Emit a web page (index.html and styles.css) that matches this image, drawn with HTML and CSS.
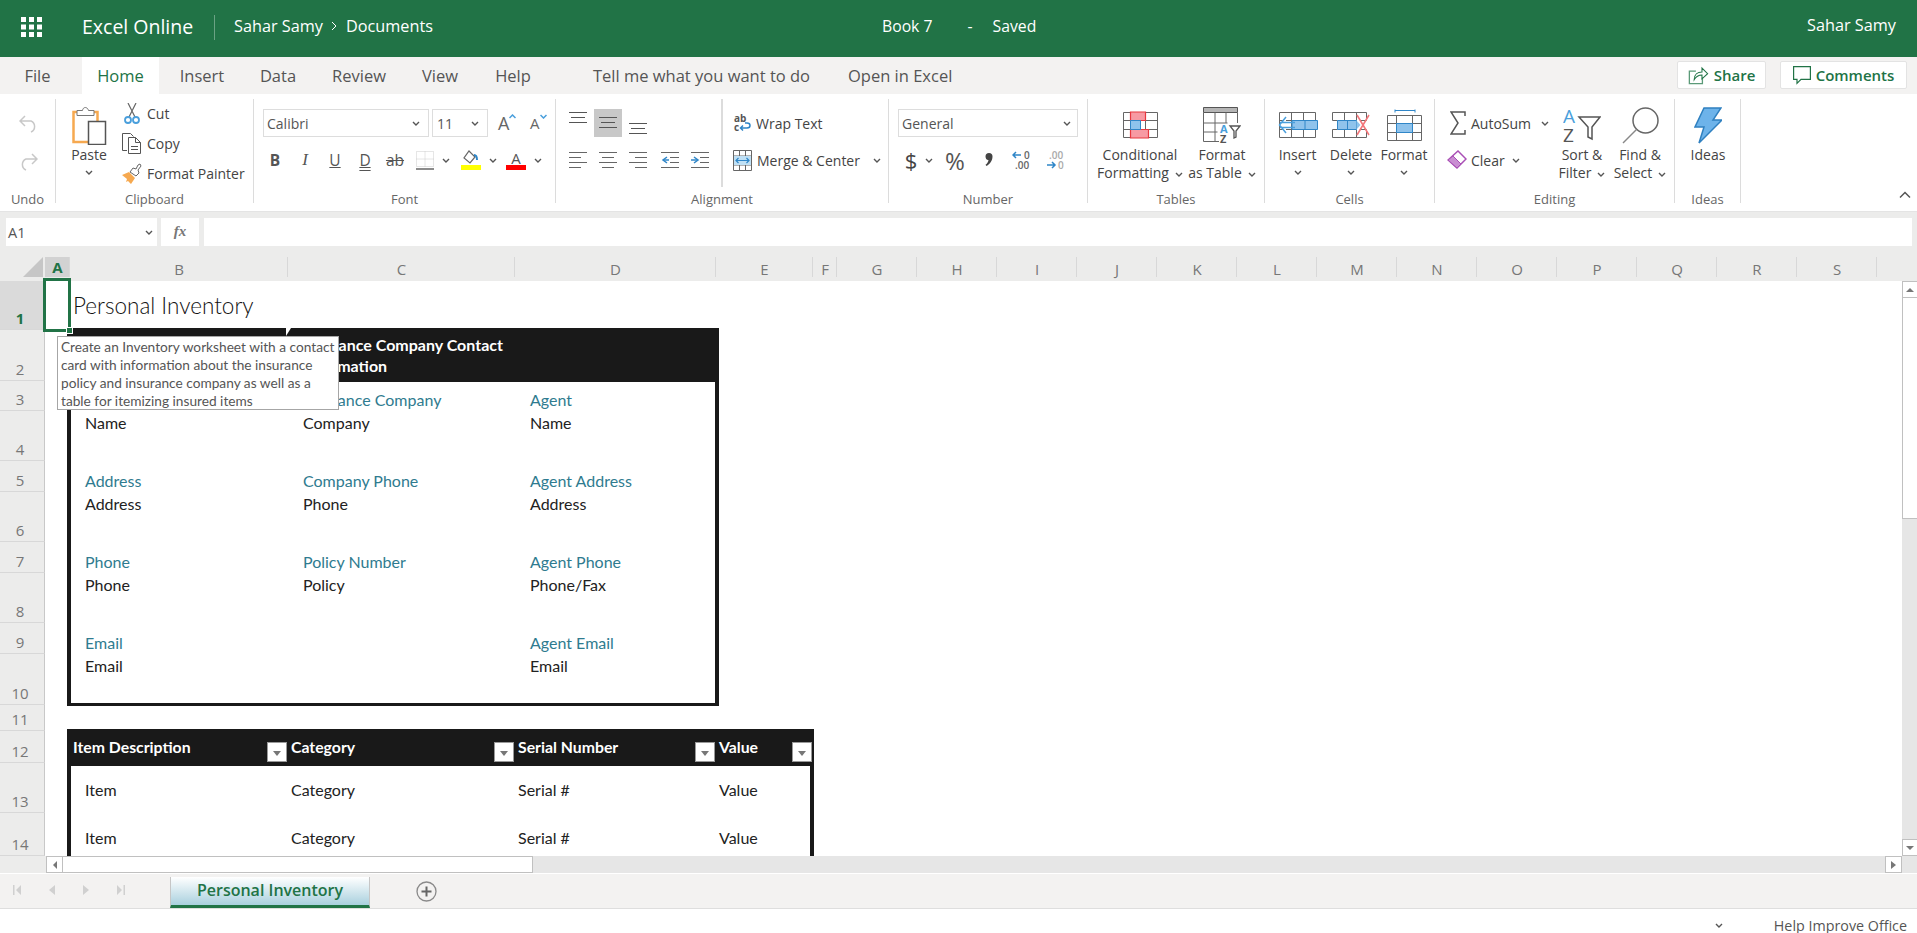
FILE: index.html
```html
<!DOCTYPE html>
<html lang="en">
<head>
    <meta charset="UTF-8">
    <meta name="viewport" content="width=device-width, initial-scale=1.0">
    <title>Book 7 - Excel Online</title>
    <link rel="stylesheet" href="styles.css">
</head>
<body>
<svg class="defs" width="0" height="0">
    <symbol id="chev" viewBox="0 0 8 5"><path d="M1 1l3 3 3-3" fill="none" stroke="#555" stroke-width="1.4"/></symbol>
    <symbol id="lines-top" viewBox="0 0 18 12"><path d="M0 .5h18M2 5.5h14M0 10.5h18" fill="none" stroke="#555"/></symbol>
    <symbol id="lines-left" viewBox="0 0 18 18"><path d="M0 1.5h18M0 6.5h12M0 11.5h18M0 16.5h12" fill="none" stroke="#666"/></symbol>
    <symbol id="lines-center" viewBox="0 0 18 18"><path d="M0 1.5h18M3 6.5h12M0 11.5h18M3 16.5h12" fill="none" stroke="#666"/></symbol>
    <symbol id="lines-right" viewBox="0 0 18 18"><path d="M0 1.5h18M6 6.5h12M0 11.5h18M6 16.5h12" fill="none" stroke="#666"/></symbol>
</svg>

<header class="topbar">
    <svg class="waffle" width="21" height="20" viewBox="0 0 21 20" fill="#fff"><path d="M0 0h5v5H0zM8 0h5v5H8zM16 0h5v5h-5zM0 7.5h5v5H0zM8 7.5h5v5H8zM16 7.5h5v5h-5zM0 15h5v5H0zM8 15h5v5H8zM16 15h5v5h-5z"/></svg>
    <span class="app_name">Excel Online</span>
    <span class="top_sep"></span>
    <span class="crumb">Sahar Samy</span>
    <svg class="crumb_arrow" width="7" height="10" viewBox="0 0 7 10"><path d="M1 1l4 4-4 4" fill="none" stroke="#fff"/></svg>
    <span class="crumb">Documents</span>
    <div class="doc_title"><span>Book 7</span><span class="doc_dash">-</span><span>Saved</span></div>
    <span class="user_name">Sahar Samy</span>
</header>

<nav class="tabs">
    <a class="tab tab_file">File</a>
    <a class="tab tab_home">Home</a>
    <a class="tab tab_insert">Insert</a>
    <a class="tab tab_data">Data</a>
    <a class="tab tab_review">Review</a>
    <a class="tab tab_view">View</a>
    <a class="tab tab_help">Help</a>
    <a class="tab tab_tell">Tell me what you want to do</a>
    <a class="tab tab_open">Open in Excel</a>
    <div class="tab_actions">
        <button class="pill pill_share">
            <svg width="21" height="20" viewBox="0 0 24 23" fill="none" stroke="#5b9a78" stroke-width="1.5"><path d="M9 7H1.5v14.5h15V15"/><path d="M7 17c0-6 4-9 9-9V3.5l6.500 6.500-6.500 6v-4.500c-4 0-7 2-9 5.500z" stroke="#217346" stroke-width="1.2"/></svg>
            Share
        </button>
        <button class="pill pill_comments">
            <svg width="18" height="19" viewBox="0 0 18 19" fill="none" stroke="#217346" stroke-width="1.2"><path d="M.6.6h16.8v12.8H8l-4 4v-4H.6z"/></svg>
            Comments
        </button>
    </div>
</nav>

<section class="ribbon">
    <div class="group group_undo">
        <div class="group_body undo_body">
            <svg width="19" height="18" viewBox="0 0 19 18" fill="none" stroke="#c8c8c8" stroke-width="1.5"><path d="M6 1L1 6l5 5M1 6h11a6 6 0 0 1 0 11"/></svg>
            <svg width="19" height="18" viewBox="0 0 19 18" fill="none" stroke="#c8c8c8" stroke-width="1.5"><path d="M13 1l5 5-5 5M18 6H7a6 6 0 0 0 0 11"/></svg>
        </div>
        <div class="group_label">Undo</div>
    </div>

    <div class="group group_clip">
        <div class="group_body clip_body">
            <div class="big_btn paste_btn">
                <div class="big_icon">
                    <svg width="35" height="39" viewBox="0 0 35 39" fill="none"><rect x="1.5" y="6" width="24" height="30" fill="#fff" stroke="#f6a950" stroke-width="2.5"/><path d="M5 4.5h5.500c.5-4 5-4 6 0H22v5H5z" fill="#fff" stroke="#777"/><rect x="16.5" y="15.5" width="17" height="23" fill="#fff" stroke="#555" stroke-width="1.5"/></svg>
                </div>
                <span>Paste</span>
                <svg class="chev chev_under"><use href="#chev"/></svg>
            </div>
            <div class="clip_rows">
                <div class="clip_row">
                    <svg width="20" height="21" viewBox="0 0 20 21" fill="none"><path d="M6 0l7 14M14 0L7 14" stroke="#666" stroke-width="1.2"/><circle cx="6" cy="17" r="3" stroke="#4a9fdc" stroke-width="1.8"/><circle cx="14" cy="17" r="3" stroke="#4a9fdc" stroke-width="1.8"/></svg>
                    <span>Cut</span>
                </div>
                <div class="clip_row">
                    <svg width="20" height="21" viewBox="0 0 20 21" fill="none" stroke="#555"><path d="M5 17.5H.5V.5h8l3 3"/><path d="M6.500 4.500h7l5 5v11h-12zM13.500 4.500v5h5M9 13.500h7M9 16.500h7"/></svg>
                    <span>Copy</span>
                </div>
                <div class="clip_row">
                    <svg width="20" height="21" viewBox="0 0 20 21"><path d="M0 12l7-3 6 6-4 6-3-3-2 1 1-3z" fill="#f6a950"/><path d="M8 9l3-4 3 1 2-4 2-1 1 2-3 4 1 3-3 3z" fill="#fff" stroke="#666"/></svg>
                    <span>Format Painter</span>
                </div>
            </div>
        </div>
        <div class="group_label">Clipboard</div>
    </div>

    <div class="group group_font">
        <div class="group_body">
            <div class="tool_row">
                <div class="select select_font"><span>Calibri</span><svg class="chev"><use href="#chev"/></svg></div>
                <div class="select select_size"><span>11</span><svg class="chev"><use href="#chev"/></svg></div>
                <div class="grow_font">A<svg width="7" height="5" viewBox="0 0 7 5"><path d="M.5 4l3-3 3 3" fill="none" stroke="#4a9fdc" stroke-width="1.5"/></svg></div>
                <div class="grow_font grow_small">A<svg width="7" height="5" viewBox="0 0 7 5"><path d="M.5 1l3 3 3-3" fill="none" stroke="#4a9fdc" stroke-width="1.5"/></svg></div>
            </div>
            <div class="tool_row font_tools">
                <span class="tool tool_b">B</span>
                <span class="tool tool_i">I</span>
                <span class="tool tool_u">U</span>
                <span class="tool tool_d">D</span>
                <span class="tool tool_s">ab</span>
                <span class="tool">
                    <svg width="18" height="19" viewBox="0 0 18 19" fill="none"><path d="M.5.5h17v15H.5zM9 .5v15M.5 8h17" stroke="#ccc" stroke-dasharray="1 1"/><path d="M0 18h18" stroke="#666" stroke-width="1.5"/></svg>
                </span>
                <svg class="chev chev_tool"><use href="#chev"/></svg>
                <span class="tool tool_fill">
                    <svg width="20" height="20" viewBox="0 0 20 20"><path d="M8 1l6 6-5 6-6-5z" fill="#fff" stroke="#666" stroke-width="1.2"/><path d="M13 5c3 0 3 3 3 5" fill="none" stroke="#2f86c8" stroke-width="2"/><path d="M0 15h20v5H0z" fill="#ffff00"/></svg>
                </span>
                <svg class="chev chev_tool2"><use href="#chev"/></svg>
                <span class="tool tool_color"><span class="color_a">A</span><i class="color_bar"></i></span>
                <svg class="chev chev_tool2"><use href="#chev"/></svg>
            </div>
        </div>
        <div class="group_label">Font</div>
    </div>

    <div class="group group_align">
        <div class="group_body align_body">
            <div class="align_left">
                <div class="tool_row align_row">
                    <svg class="ic18 ic_top" viewBox="0 0 18 12"><use href="#lines-top"/></svg>
                    <span class="align_on"><svg class="ic18 ic_mid" viewBox="0 0 18 12"><use href="#lines-top"/></svg></span>
                    <svg class="ic18 ic_bot" viewBox="0 0 18 12"><use href="#lines-top"/></svg>
                </div>
                <div class="tool_row align_row2">
                    <svg class="ic18 ic_full"><use href="#lines-left"/></svg>
                    <svg class="ic18 ic_full"><use href="#lines-center"/></svg>
                    <svg class="ic18 ic_full"><use href="#lines-right"/></svg>
                    <svg class="ic18 ic_full" viewBox="0 0 18 18"><path d="M9 6.5h9M9 11.5h9M0 16.5h18M0 1.5h18" fill="none" stroke="#666"/><path d="M6 6L2 9l4 3" fill="none" stroke="#2f86c8" stroke-width="1.5"/><path d="M2 9h6" stroke="#2f86c8" stroke-width="1.5"/></svg>
                    <svg class="ic18 ic_full" viewBox="0 0 18 18"><path d="M9 6.5h9M9 11.5h9M0 16.5h18M0 1.5h18" fill="none" stroke="#666"/><path d="M3 6l4 3-4 3" fill="none" stroke="#2f86c8" stroke-width="1.5"/><path d="M0 9h6" stroke="#2f86c8" stroke-width="1.5"/></svg>
                </div>
            </div>
            <div class="align_right">
                <div class="tool_row wrap_row">
                    <svg class="wrap_ic" width="19" height="19" viewBox="0 0 19 19"><text x="1" y="8" class="wrap_letters">ab</text><text x="1" y="17" class="wrap_letters">c</text><path d="M8 14h6c4 0 4-5 0-5h-2M10 11.5L7.5 14l2.500 2.500" fill="none" stroke="#2f86c8" stroke-width="1.5"/></svg>
                    <span>Wrap Text</span>
                </div>
                <div class="tool_row merge_row">
                    <svg width="19" height="21" viewBox="0 0 19 21"><path d="M.5.5h18v20H.5zM.5 6h18M.5 15h18M6.500.5V6M12.500.5V6M6.500 15v5.500M12.500 15v5.500" fill="none" stroke="#666"/><path d="M1 6h17v9H1z" fill="#bfe0f5"/><path d="M3 10.5h13M5.500 8L3 10.500 5.500 13M13.500 8l2.500 2.500-2.500 2.500" fill="none" stroke="#2f86c8" stroke-width="1.2"/></svg>
                    <span>Merge &amp; Center</span>
                    <svg class="chev chev_merge"><use href="#chev"/></svg>
                </div>
            </div>
        </div>
        <div class="group_label">Alignment</div>
    </div>

    <div class="group group_number">
        <div class="group_body">
            <div class="tool_row">
                <div class="select select_number"><span>General</span><svg class="chev"><use href="#chev"/></svg></div>
            </div>
            <div class="tool_row number_tools">
                <span class="num_dollar">$</span>
                <svg class="chev chev_dollar"><use href="#chev"/></svg>
                <span class="num_percent">%</span>
                <svg class="num_comma" width="10" height="16" viewBox="0 0 10 16"><path d="M1.500 4.500a3.500 3.500 0 1 1 7 0c0 4-2.500 7.500-6 9.500l-1-1.200c1.500-1.200 2.700-2.800 3-4.900-1.800.2-3-1.400-3-3.400z" fill="#444"/></svg>
                <span class="num_dec">
                    <svg width="20" height="20" viewBox="0 0 20 20"><path d="M1 5h8M4 2L1 5l3 3" fill="none" stroke="#2f86c8" stroke-width="1.5"/><text x="12" y="9" class="dec_text">0</text><text x="3" y="19" class="dec_text">.00</text></svg>
                </span>
                <span class="num_dec num_dec2">
                    <svg width="20" height="20" viewBox="0 0 20 20"><text x="3" y="9" class="dec_text dec_light">.00</text><path d="M1 15h8M6 12l3 3-3 3" fill="none" stroke="#2f86c8" stroke-width="1.5"/><text x="12" y="19" class="dec_text dec_light">0</text></svg>
                </span>
            </div>
        </div>
        <div class="group_label">Number</div>
    </div>

    <div class="group group_tables">
        <div class="group_body btn_row">
            <div class="big_btn btn_cond">
                <div class="big_icon">
                    <svg width="35" height="28" viewBox="0 0 35 28" fill="none"><path d="M.5 1.5h34v25H.5zM.5 9.5h34M.5 18.5h34M11.500 1.500v25M22.500 1.500v25" stroke="#666"/><path d="M7.500 1h15v8.500h-15zM7.500 18.500h18V27h-18z" fill="#f79aa3" stroke="#e8383f" stroke-width="1.2"/><path d="M7.500 9.500h10v9h-10z" fill="#8fc3ec" stroke="#2f86c8"/></svg>
                </div>
                <span>Conditional</span>
                <span>Formatting<svg class="chev chev_in"><use href="#chev"/></svg></span>
            </div>
            <div class="big_btn btn_table">
                <div class="big_icon">
                    <svg width="38" height="36" viewBox="0 0 38 36" fill="none"><path d="M.5.5h34v5H.5z" fill="#b5b5b5" stroke="#555"/><path d="M.5 5.5v29H16M34.500 5.500V16M.5 16h24M.5 25h14M12 5.500v29M23 5.500V16" stroke="#666"/><text x="17" y="26" class="sort_a sort_sm">A</text><text x="17" y="36" class="sort_z sort_sm">Z</text><path d="M27 19h10l-4 5v6l-2 1v-7z" fill="#fff" stroke="#555" stroke-width="1.3"/></svg>
                </div>
                <span>Format</span>
                <span>as Table<svg class="chev chev_in"><use href="#chev"/></svg></span>
            </div>
        </div>
        <div class="group_label">Tables</div>
    </div>

    <div class="group group_cells">
        <div class="group_body btn_row">
            <div class="big_btn btn_cell btn_insert">
                <div class="big_icon">
                    <svg width="40" height="28" viewBox="0 0 40 28" fill="none"><path d="M1.500 1.500h36v25h-36zM1.500 9.500h36M1.500 18.500h36M13.500 1.500v25M25.500 1.500v25" stroke="#666"/><path d="M14 9.500h25.500v9H14z" fill="#8fc3ec" stroke="#2f86c8"/><path d="M27 9.500v9" stroke="#2f86c8"/><path d="M8 6L1.500 14 8 22M2 11.500h15M2 16.500h15" fill="#fff" stroke="#4a9fdc" stroke-width="1.5"/></svg>
                </div>
                <span>Insert</span>
                <svg class="chev chev_under"><use href="#chev"/></svg>
            </div>
            <div class="big_btn btn_cell btn_delete">
                <div class="big_icon">
                    <svg width="38" height="28" viewBox="0 0 38 28" fill="none"><path d="M.5 9.500v-8h34v8M.5 18.500v8h34v-8M.5 9.500h5M.5 18.500h5M29 9.500h5.500M29 18.500h5.500M12.500 1.500v8M12.500 18.500v8M24.500 1.500v8M24.500 18.500v8" stroke="#666"/><path d="M5.500 9.500h19v9h-19z" fill="#8fc3ec" stroke="#2f86c8"/><path d="M15.500 9.500v9" stroke="#2f86c8"/><path d="M24.500 9.500l4 4.500-4 4.500" fill="#8fc3ec"/><path d="M25 4l12 20M37 4L25 24" stroke="#f2767a" stroke-width="1.6"/></svg>
                </div>
                <span>Delete</span>
                <svg class="chev chev_under"><use href="#chev"/></svg>
            </div>
            <div class="big_btn btn_cell btn_format">
                <div class="big_icon">
                    <svg width="35" height="33" viewBox="0 0 35 33" fill="none"><path d="M8 1.500h20M8 .5v3M28 .5v3" stroke="#2f86c8"/><path d="M.5 6.500h34v25H.5zM.5 14.500h34M.5 23.500h34M9.500 6.500v25M25.500 6.500v25" stroke="#666"/><path d="M9.500 14.500h16v9h-16z" fill="#8fc3ec" stroke="#2f86c8"/></svg>
                </div>
                <span>Format</span>
                <svg class="chev chev_under"><use href="#chev"/></svg>
            </div>
        </div>
        <div class="group_label">Cells</div>
    </div>

    <div class="group group_editing">
        <div class="group_body btn_row">
            <div class="edit_small">
                <div class="edit_row">
                    <svg width="16" height="24" viewBox="0 0 16 24" fill="none"><path d="M15 5V1H1l7 11-7 11h14v-4" stroke="#555" stroke-width="1.5"/></svg>
                    <span>AutoSum</span>
                    <svg class="chev chev_sum"><use href="#chev"/></svg>
                </div>
                <div class="edit_row edit_clear">
                    <svg width="20" height="20" viewBox="0 0 20 20" fill="none"><path d="M11 1l8 8-9 9-9-8z" fill="#fff" stroke="#a94fb5" stroke-width="1.5"/><path d="M6 6l8 8-4 4-9-8z" fill="#c98ed2" stroke="#a94fb5"/></svg>
                    <span>Clear</span>
                    <svg class="chev chev_clear"><use href="#chev"/></svg>
                </div>
            </div>
            <div class="big_btn btn_sort">
                <div class="big_icon">
                    <svg width="38" height="35" viewBox="0 0 38 35" fill="none"><text x="0" y="15" class="sort_a">A</text><text x="0" y="34" class="sort_z">Z</text><path d="M16 9h21l-8 10v12l-4-2V19z" stroke="#555" stroke-width="1.5"/></svg>
                </div>
                <span>Sort &amp;</span>
                <span>Filter<svg class="chev chev_in"><use href="#chev"/></svg></span>
            </div>
            <div class="big_btn btn_find">
                <div class="big_icon">
                    <svg width="37" height="37" viewBox="0 0 37 37" fill="none"><circle cx="23.5" cy="13.5" r="12.5" stroke="#666" stroke-width="1.5"/><path d="M14.500 22.500L1 36" stroke="#888" stroke-width="1.5"/></svg>
                </div>
                <span>Find &amp;</span>
                <span>Select<svg class="chev chev_in"><use href="#chev"/></svg></span>
            </div>
        </div>
        <div class="group_label">Editing</div>
    </div>

    <div class="group group_ideas">
        <div class="group_body btn_row">
            <div class="big_btn btn_ideas">
                <div class="big_icon">
                    <svg width="28" height="37" viewBox="0 0 28 37"><path d="M10 1h17l-8 12h9L5 36l5-16H1z" fill="#6db3ea" stroke="#2f80c0" stroke-width="1.5"/></svg>
                </div>
                <span>Ideas</span>
            </div>
        </div>
        <div class="group_label">Ideas</div>
    </div>

    <svg class="collapse" width="12" height="8" viewBox="0 0 12 8"><path d="M1 6.5l5-5 5 5" fill="none" stroke="#555" stroke-width="1.5"/></svg>
</section>

<section class="formula_bar">
    <div class="name_box"><span>A1</span><svg class="chev"><use href="#chev"/></svg></div>
    <div class="fx_box">fx</div>
    <div class="formula_input"></div>
</section>

<main class="sheet">
    <div class="corner"><svg width="20" height="20" viewBox="0 0 20 20"><path d="M20 0v20H0z" fill="#c6c6c6"/></svg></div>
    <div class="col_head col_sel">A</div>
    <div class="col_head">B</div>
    <div class="col_head">C</div>
    <div class="col_head">D</div>
    <div class="col_head">E</div>
    <div class="col_head">F</div>
    <div class="col_head">G</div>
    <div class="col_head">H</div>
    <div class="col_head">I</div>
    <div class="col_head">J</div>
    <div class="col_head">K</div>
    <div class="col_head">L</div>
    <div class="col_head">M</div>
    <div class="col_head">N</div>
    <div class="col_head">O</div>
    <div class="col_head">P</div>
    <div class="col_head">Q</div>
    <div class="col_head">R</div>
    <div class="col_head">S</div>
    <div class="col_head col_last"></div>

    <div class="row_head row_sel r1">1</div>
    <div class="row_head r2">2</div>
    <div class="row_head r3">3</div>
    <div class="row_head r4">4</div>
    <div class="row_head r5">5</div>
    <div class="row_head r6">6</div>
    <div class="row_head r7">7</div>
    <div class="row_head r8">8</div>
    <div class="row_head r9">9</div>
    <div class="row_head r10">10</div>
    <div class="row_head r11">11</div>
    <div class="row_head r12">12</div>
    <div class="row_head r13">13</div>
    <div class="row_head r14">14</div>

    <div class="card card_contact"><div class="card_band"></div></div>
    <div class="card card_items"><div class="card_band band_items"></div></div>

    <div class="title r1 cb">Personal Inventory</div>

    <div class="band_text r2 cc">Insurance Company Contact Information</div>

    <div class="label r3 cc">Insurance Company</div>
    <div class="label r3 cd">Agent</div>
    <div class="value r4 cb">Name</div>
    <div class="value r4 cc">Company</div>
    <div class="value r4 cd">Name</div>

    <div class="label r5 cb">Address</div>
    <div class="label r5 cc">Company Phone</div>
    <div class="label r5 cd">Agent Address</div>
    <div class="value r6 cb">Address</div>
    <div class="value r6 cc">Phone</div>
    <div class="value r6 cd">Address</div>

    <div class="label r7 cb">Phone</div>
    <div class="label r7 cc">Policy Number</div>
    <div class="label r7 cd">Agent Phone</div>
    <div class="value r8 cb">Phone</div>
    <div class="value r8 cc">Policy</div>
    <div class="value r8 cd">Phone/Fax</div>

    <div class="label r9 cb">Email</div>
    <div class="label r9 cd">Agent Email</div>
    <div class="value r10 cb">Email</div>
    <div class="value r10 cd">Email</div>

    <div class="th r12 cb"><span>Item Description</span><i class="filter"></i></div>
    <div class="th r12 cc"><span>Category</span><i class="filter"></i></div>
    <div class="th r12 cd"><span>Serial Number</span><i class="filter"></i></div>
    <div class="th r12 ce"><span>Value</span><i class="filter"></i></div>

    <div class="td13 r13 cb td_first">Item</div>
    <div class="td13 r13 cc">Category</div>
    <div class="td13 r13 cd">Serial #</div>
    <div class="td13 r13 ce">Value</div>
    <div class="td14 r14 cb td_first">Item</div>
    <div class="td14 r14 cc">Category</div>
    <div class="td14 r14 cd">Serial #</div>
    <div class="td14 r14 ce">Value</div>

    <div class="vscroll">
        <button class="sb_btn"><i class="arrow_up"></i></button>
        <div class="sb_thumb_v"></div>
        <div class="sb_track"></div>
        <button class="sb_btn"><i class="arrow_down"></i></button>
    </div>

    <div class="selection"><i class="sel_handle"></i></div>
    <div class="notch"></div>
    <div class="tooltip">Create an Inventory worksheet with a contact<br>card with information about the insurance<br>policy and insurance company as well as a<br>table for itemizing insured items</div>
</main>

<div class="hscroll">
    <div class="hs_gap"></div>
    <button class="hs_btn"><i class="arrow_left"></i></button>
    <div class="hs_thumb"></div>
    <div class="hs_track"></div>
    <button class="hs_btn hs_btn_r"><i class="arrow_right"></i></button>
</div>

<div class="sheet_tabs">
    <div class="sheet_nav">
        <svg width="8" height="12" viewBox="0 0 8 12" fill="#d0d0d0"><path d="M0 1h1.5v10H0zM8 1v10L3 6z"/></svg>
        <svg width="6" height="12" viewBox="0 0 6 12" fill="#d0d0d0"><path d="M6 1v10L0 6z"/></svg>
        <svg width="6" height="12" viewBox="0 0 6 12" fill="#d0d0d0"><path d="M0 1v10l6-5z"/></svg>
        <svg width="8" height="12" viewBox="0 0 8 12" fill="#d0d0d0"><path d="M8 1H6.5v10H8zM0 1v10l5-5z"/></svg>
    </div>
    <div class="sheet_tab">Personal Inventory</div>
    <svg class="add_sheet" width="21" height="21" viewBox="0 0 21 21" fill="none"><circle cx="10.5" cy="10.5" r="9.5" stroke="#8a8a8a" stroke-width="1.3"/><path d="M10.5 5.5v10M5.5 10.5h10" stroke="#666" stroke-width="2"/></svg>
</div>

<footer class="status">
    <svg class="chev"><use href="#chev"/></svg>
    <span class="status_text">Help Improve Office</span>
</footer>
</body>
</html>
```

FILE: styles.css
```css
*{
	box-sizing: border-box;
}
html, body{
	margin: 0;
	padding: 0;
	height: 933px;
	overflow: hidden;
	background: #fff;
	font-family: "Open Sans", sans-serif;
	color: #444;
}
.defs{ position: absolute; }
button{ font-family: inherit; padding: 0; }
.chev{ width: 8px; height: 5px; flex: none; }

/* top green bar */
.topbar{
	height: 57px;
	background: #217346;
	color: #fff;
	display: flex;
	align-items: center;
	position: relative;
	padding-left: 21px;
}
.waffle{ margin-top: -3px; }
.app_name{ font-size: 19.5px; margin: -5px 0 0 40px; width: 132px; white-space: nowrap; }
.top_sep{ width: 1px; height: 25px; background: #6ba284; margin-top: -3px; }
.crumb{ font-size: 16.25px; margin: -5px 0 0 19px; white-space: nowrap; }
.crumb_arrow{ margin: -6px -11px 0 8px; }
.doc_title{
	position: absolute;
	left: 882px;
	top: 15px;
	font-size: 15.75px;
	display: flex;
}
.doc_dash{ margin: 0 20px 0 35px; }
.user_name{ position: absolute; right: 21px; top: 14px; font-size: 16.25px; }

/* tab row */
.tabs{
	height: 37px;
	background: #f3f2f1;
	display: flex;
	position: relative;
	font-size: 16.5px;
	line-height: 38px;
	color: #555;
}
.tab{ display: block; text-align: center; white-space: nowrap; }
.tab_file{ width: 82px; padding-right: 7px; }
.tab_home{ width: 77px; background: #fff; color: #217346; }
.tab_insert{ width: 86px; }
.tab_data{ width: 66px; }
.tab_review{ width: 96px; }
.tab_view{ width: 66px; }
.tab_help{ width: 80px; }
.tab_tell{ margin-left: 40px; width: 217px; }
.tab_open{ margin-left: 38px; width: 104px; }
.tab_actions{
	position: absolute;
	right: 10px;
	top: 4px;
	display: flex;
	gap: 14px;
}
.pill{
	height: 28px;
	background: #fff;
	border: 1px solid #e3e3e3;
	border-radius: 2px;
	color: #217346;
	font-size: 15px;
	font-weight: 600;
	display: flex;
	align-items: center;
	justify-content: center;
	gap: 5px;
}
.pill_share{ width: 89px; }
.pill_comments{ width: 127px; }

/* ribbon */
.ribbon{
	height: 118px;
	padding-top: 5px;
	background: #fff;
	display: flex;
	position: relative;
	border-bottom: 1px solid #e4e4e4;
}
.group{
	height: 104px;
	border-right: 1px solid #dcdcdc;
	display: flex;
	flex-direction: column;
	flex: none;
}
.group_body{ height: 92px; font-size: 14px; color: #444; flex: none; }
.group_label{
	text-align: center;
	font-size: 13px;
	line-height: 16px;
	height: 12px;
	color: #666;
}
.group_undo{ width: 56px; }
.group_clip{ width: 198px; }
.group_font{ width: 302px; }
.group_align{ width: 333px; }
.group_number{ width: 199px; }
.group_tables{ width: 177px; }
.group_cells{ width: 170px; }
.group_editing{ width: 240px; }
.group_ideas{ width: 66px; }
.collapse{ position: absolute; left: 1899px; top: 97px; }

.undo_body{
	display: flex;
	flex-direction: column;
	padding: 16px 0 0 19px;
	gap: 20px;
}

.big_btn{
	display: flex;
	flex-direction: column;
	align-items: center;
	padding-top: 5px;
	line-height: 18px;
	white-space: nowrap;
	flex: none;
}
.big_icon{
	height: 42px;
	display: flex;
	align-items: center;
	justify-content: center;
}
.chev_under{ margin-top: 6px; }
.chev_in{ margin-left: 6px; vertical-align: 1px; }

/* clipboard */
.clip_body{ display: flex; }
.paste_btn{ width: 66px; }
.clip_rows{ display: flex; flex-direction: column; margin-top: -1px; }
.clip_row{
	height: 30px;
	display: flex;
	align-items: center;
	gap: 5px;
	white-space: nowrap;
}

/* font and number rows */
.tool_row{ display: flex; align-items: center; height: 28px; margin-top: 10px; }
.tool_row + .tool_row{ margin-top: 9px; }
.select{
	height: 28px;
	border: 1px solid #ddd;
	background: #fff;
	display: flex;
	align-items: center;
	justify-content: space-between;
	padding: 0 8px 0 3px;
	font-size: 14px;
	color: #555;
}
.select_font{ width: 166px; margin-left: 9px; }
.select_size{ width: 56px; margin-left: 3px; padding-left: 4px; }
.select_number{ width: 180px; margin-left: 9px; padding-right: 6px; }
.grow_font{
	font-size: 18px;
	width: 22px;
	margin-left: 10px;
	color: #666;
	display: flex;
	align-items: flex-start;
	line-height: 22px;
}
.grow_font svg{ margin-top: 2px; }
.grow_small{ font-size: 15px; margin-left: 10px; }
.font_tools{ padding-left: 6px; }
.tool{
	width: 30px;
	text-align: center;
	font-size: 15.5px;
	color: #555;
	line-height: 20px;
	flex: none;
	display: flex;
	justify-content: center;
	align-items: center;
}
.tool_b{ font-weight: 700; }
.tool_i{ font-style: italic; font-family: "Liberation Serif", serif; font-size: 17px; }
.tool_u{ text-decoration: underline; }
.tool_d{ text-decoration: underline double; }
.tool_s{ text-decoration: line-through; }
.chev_tool{ margin: 0 2px; }
.tool_fill{ width: 34px; margin-left: 2px; }
.chev_tool2{ margin: 0 1px; }
.tool_color{ width: 34px; margin-left: 1px; flex-direction: column; height: 20px; }
.color_a{ font-size: 15px; line-height: 16px; height: 15px; }
.color_bar{ width: 20px; height: 5px; background: #ff0000; display: block; }

/* alignment */
.align_body{ display: flex; }
.align_left{ width: 165px; height: 88px; }
.align_right{ height: 88px; border-left: 2px solid #dcdcdc; padding-left: 10px; white-space: nowrap; }
.align_row{ padding-left: 13px; }
.align_row2{ padding-left: 13px; gap: 12px; }
.ic18{ width: 18px; height: 18px; flex: none; }
.ic_top, .ic_mid, .ic_bot{ height: 12px; }
.ic_top{ margin-top: -10px; }
.ic_bot{ margin: 12px 0 0 7px; }
.align_on{
	width: 28px;
	height: 28px;
	margin-left: 7px;
	background: #c8c8c8;
	display: flex;
	align-items: center;
	justify-content: center;
}
.align_row2 .ic_full:nth-child(4){ margin-left: 2px; }
.wrap_row{ gap: 4px; }
.merge_row{ gap: 5px; }
.wrap_letters{ font-size: 10px; font-weight: 700; fill: #555; font-family: "Open Sans", sans-serif; }
.chev_merge{ margin-left: 8px; }

/* number */
.number_tools{ padding-left: 13px; }
.num_dollar{ font-size: 22px; width: 18px; text-align: center; color: #444; flex: none; }
.chev_dollar{ margin-left: 5px; }
.num_percent{ font-size: 24px; margin-left: 6px; color: #555; width: 32px; text-align: center; flex: none; }
.num_comma{ margin-left: 13px; flex: none; }
.num_dec{ margin-left: 18px; display: flex; }
.num_dec2{ margin-left: 14px; }
.dec_text{ font-size: 10px; font-weight: 600; fill: #666; font-family: "Open Sans", sans-serif; }
.dec_light{ fill: #aaa; }

/* tables, cells, editing */
.btn_row{ display: flex; }
.btn_cond{ width: 96px; margin-left: 4px; }
.btn_table{ width: 68px; }
.btn_cell{ width: 55px; }
.btn_insert{ margin-left: 5px; }
.btn_delete{ width: 52px; }
.btn_format{ width: 52px; margin-left: 1px; }
.edit_small{ width: 118px; padding: 10px 0 0 15px; }
.edit_row{ height: 28px; display: flex; align-items: center; gap: 5px; white-space: nowrap; }
.edit_clear{ margin: 9px 0 0 -3px; gap: 4px; }
.chev_sum{ margin-left: 5px; }
.chev_clear{ margin-left: 3px; }
.btn_sort{ width: 58px; }
.btn_find{ width: 58px; }
.btn_ideas{ width: 66px; }
.sort_a, .sort_z{ font-size: 19px; font-family: "Open Sans", sans-serif; }
.sort_a{ fill: #4a9fdc; }
.sort_z{ fill: #555; }
.sort_sm{ font-size: 11px; font-weight: 700; }

/* formula bar */
.formula_bar{
	height: 45px;
	background: #ececeb;
	padding: 6px 5px 0 6px;
	display: flex;
	align-items: flex-start;
}
.name_box{
	width: 151px;
	height: 28px;
	background: #fff;
	display: flex;
	align-items: center;
	justify-content: space-between;
	padding: 0 4px 0 2px;
	font-size: 14.5px;
	color: #555;
}
.fx_box{
	width: 38px;
	height: 28px;
	margin-left: 4px;
	background: #fff;
	text-align: center;
	font-family: "Liberation Serif", serif;
	font-style: italic;
	font-weight: 700;
	font-size: 15px;
	line-height: 26px;
	color: #777;
}
.formula_input{
	flex: 1;
	height: 28px;
	margin-left: 5px;
	background: #fff;
}

/* sheet grid */
.sheet{
	height: 599px;
	display: grid;
	grid-template-columns: 45px 25px 218px 227px 201px 97px 24px repeat(13, 80px) 25px 15px;
	grid-template-rows: 24px 49px 51px 30px 50px 31px 50px 31px 50px 31px 51px 26px 32px 50px 43px;
	position: relative;
	overflow: hidden;
	font-family: Lato, sans-serif;
	background: #fff;
}
.corner{
	grid-column: 1;
	grid-row: 1;
	background: #ececeb;
	padding-left: 23px;
}
.col_head{
	grid-row: 1;
	background: #ececeb;
	text-align: center;
	font-family: "Open Sans", sans-serif;
	font-size: 15px;
	line-height: 24px;
	color: #777;
	position: relative;
}
.col_head::after{
	content: "";
	position: absolute;
	right: 0;
	top: 0;
	height: 20px;
	width: 1px;
	background: #d8d8d8;
}
.col_sel{
	background: linear-gradient(#d2d2d2 20px, #ececeb 20px);
	color: #217346;
	font-weight: 700;
	line-height: 20px;
}
.col_last{ grid-column: 21 / 23; }
.col_last::after{ display: none; }
.row_head{
	grid-column: 1;
	background: #ececeb;
	border-right: 1px solid #c8c8c8;
	border-bottom: 1px solid #d8d8d8;
	display: flex;
	align-items: flex-end;
	justify-content: center;
	font-family: "Open Sans", sans-serif;
	font-size: 15px;
	line-height: 20px;
	color: #777;
	padding: 0 4px 1px 0;
}
.row_sel{
	background: #dadada;
	color: #217346;
	font-weight: 700;
}
.r1{ grid-row: 2; }
.r2{ grid-row: 3; }
.r3{ grid-row: 4; }
.r4{ grid-row: 5; }
.r5{ grid-row: 6; }
.r6{ grid-row: 7; }
.r7{ grid-row: 8; }
.r8{ grid-row: 9; }
.r9{ grid-row: 10; }
.r10{ grid-row: 11; }
.r11{ grid-row: 12; }
.r12{ grid-row: 13; }
.r13{ grid-row: 14; }
.r14{ grid-row: 15; }
.cb{ grid-column: 3; }
.cc{ grid-column: 4; }
.cd{ grid-column: 5; }
.ce{ grid-column: 6; }

/* black framed tables */
.card{
	border: 4px solid #191919;
	background: #fff;
}
.card_contact{
	grid-column: 3 / 6;
	grid-row: 3 / 12;
	margin: -2px -3px -1px -3px;
	border-bottom-width: 3px;
}
.card_items{
	grid-column: 3 / 7;
	grid-row: 13 / 16;
	margin: -2px -1px -20px -3px;
}
.card_band{ height: 50px; background: #191919; }
.band_items{ height: 33px; }

.title{
	font-weight: 300;
	font-size: 22.5px;
	color: #111;
	padding: 8px 0 0 3px;
	line-height: 34px;
	white-space: nowrap;
}
.band_text{
	color: #fff;
	font-weight: 700;
	font-size: 16px;
	line-height: 21px;
	padding: 4px 0 0 15px;
	width: 240px;
	z-index: 1;
}
.label, .value, .td13, .td14{
	font-size: 16px;
	line-height: 20px;
	white-space: nowrap;
	z-index: 1;
}
.label{ color: #2f7b8f; padding: 0 0 1px 15px; align-self: end; }
.value{ color: #222; padding: 2px 0 0 15px; }

.th{
	color: #fff;
	font-weight: 700;
	font-size: 15.8px;
	display: flex;
	justify-content: space-between;
	align-items: flex-start;
	padding: 5px 1px 0 3px;
	line-height: 22px;
	z-index: 1;
	white-space: nowrap;
}
.filter{
	width: 20px;
	height: 20px;
	margin-top: 6px;
	background: #fff;
	border: 1px solid #999;
	position: relative;
	flex: none;
}
.filter::after{
	content: "";
	position: absolute;
	left: 5px;
	top: 8px;
	border: 4px solid transparent;
	border-top: 5px solid #777;
	border-bottom: 0;
}
.td13, .td14{ color: #222; padding-left: 3px; }
.td13{ align-self: end; margin-bottom: 13px; }
.td14{ padding-top: 15px; }
.td_first{ padding-left: 15px; }

/* scrollbars */
.vscroll{
	grid-column: 22;
	grid-row: 2 / 16;
	background: #e6e6e6;
	display: flex;
	flex-direction: column;
	z-index: 2;
}
.sb_btn{
	height: 17px;
	background: #fff;
	border: 1px solid #c0c0c0;
	border-right: 0;
	display: flex;
	align-items: center;
	justify-content: center;
	flex: none;
}
.sb_thumb_v{
	height: 221px;
	background: #fff;
	border-left: 1px solid #c0c0c0;
	border-bottom: 1px solid #c0c0c0;
	flex: none;
}
.sb_track{ flex: 1; }
.arrow_up, .arrow_down, .arrow_left, .arrow_right{ width: 0; height: 0; display: block; }
.arrow_up{ border: 4px solid transparent; border-width: 0 4px 4px; border-bottom-color: #777; }
.arrow_down{ border: 4px solid transparent; border-width: 4px 4px 0; border-top-color: #777; }
.arrow_left{ border: 4px solid transparent; border-width: 4px 4px 4px 0; border-right-color: #777; }
.arrow_right{ border: 4px solid transparent; border-width: 4px 0 4px 5px; border-left-color: #777; }

.hscroll{
	height: 17px;
	display: flex;
	background: #e6e6e6;
}
.hs_gap{ width: 46px; background: #ececeb; }
.hs_btn{
	width: 17px;
	background: #fff;
	border: 1px solid #c0c0c0;
	display: flex;
	align-items: center;
	justify-content: center;
	flex: none;
}
.hs_btn_r{ margin-right: 15px; }
.hs_thumb{
	width: 470px;
	background: #fff;
	border: 1px solid #c0c0c0;
	border-left: 0;
}
.hs_track{ flex: 1; }

/* overlays on the sheet */
.selection{
	position: absolute;
	left: 43px;
	top: 21px;
	width: 28px;
	height: 54px;
	border: 3px solid #217346;
	z-index: 3;
}
.sel_handle{
	position: absolute;
	right: -5px;
	bottom: -5px;
	width: 7px;
	height: 7px;
	background: #217346;
	border: 1px solid #fff;
}
.notch{
	position: absolute;
	left: 286px;
	top: 71px;
	width: 0;
	height: 0;
	border-top: 8px solid #fff;
	border-right: 5px solid transparent;
	z-index: 2;
}
.tooltip{
	position: absolute;
	left: 57px;
	top: 79px;
	width: 282px;
	height: 74px;
	padding: 1px 0 0 3px;
	background: #fff;
	border: 1px solid #a6a6a6;
	font-size: 13.7px;
	line-height: 18px;
	color: #555;
	white-space: nowrap;
	z-index: 4;
}

/* sheet tabs and status */
.sheet_tabs{
	height: 36px;
	background: #f3f2f1;
	border-top: 1px solid #fff;
	border-bottom: 1px solid #dedede;
	display: flex;
	position: relative;
}
.sheet_nav{
	width: 170px;
	padding: 10px 0 0 13px;
	display: flex;
	gap: 28px;
	align-items: flex-start;
}
.sheet_tab{
	width: 200px;
	height: 31px;
	margin-top: 3px;
	background: linear-gradient(#fff, #a9d0de);
	border: 1px solid #c6c6c6;
	border-top: 0;
	border-bottom: 3px solid #217346;
	color: #217346;
	font-size: 16px;
	font-weight: 600;
	text-align: center;
	line-height: 26px;
}
.add_sheet{ margin: 7px 0 0 46px; }
.status{
	height: 24px;
	display: flex;
	align-items: center;
	justify-content: flex-end;
	padding: 9px 10px 0 0;
}
.status .chev{ margin-right: 51px; }
.status_text{ font-size: 14.3px; color: #555; white-space: nowrap; }
```
